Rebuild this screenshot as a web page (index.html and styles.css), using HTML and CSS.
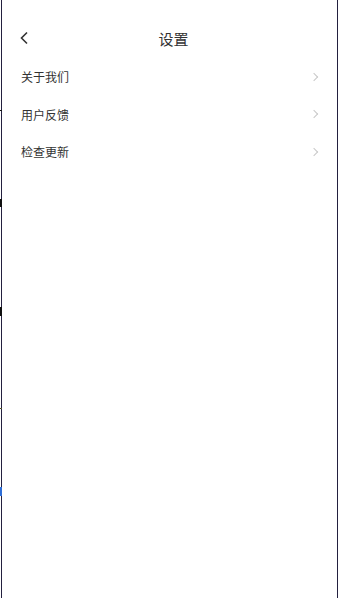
FILE: index.html
```html
<!DOCTYPE html>
<html lang="zh-CN">
<head>
    <meta charset="UTF-8">
    <meta name="viewport" content="width=device-width, initial-scale=1.0">
    <title>设置</title>
    <link rel="stylesheet" href="styles.css">
</head>
<body>
    <div class="frame">
        <!-- Header -->
        <header class="nav">
            <a href="#" class="back">
                <svg width="10" height="14" viewBox="0 0 10 14"><path d="M8 1.5 L2.5 7 L8 12.5" fill="none" stroke="#333" stroke-width="1.6"/></svg>
            </a>
            <div class="title">设置</div>
            <div class="spacer"></div>
        </header>

        <!-- Settings list -->
        <ul class="menu">
            <li class="item"><span>关于我们</span><i class="arrow"></i></li>
            <li class="item"><span>用户反馈</span><i class="arrow"></i></li>
            <li class="item"><span>检查更新</span><i class="arrow"></i></li>
        </ul>
    </div>

    <!-- bits of the window behind, peeking at the left edge -->
    <div class="edge e1"></div>
    <div class="edge e2"></div>
    <div class="edge e3"></div>
    <div class="edge e4"></div>
    <div class="edge e5"></div>
</body>
</html>
```

FILE: styles.css
```css
* {
    margin: 0;
    padding: 0;
    box-sizing: border-box;
}
body {
    background-color: #fff;
    font-family: "Noto Sans CJK SC", "Noto Sans", sans-serif;
    color: #333;
}
.frame {
    margin-left: 1px;
    width: 337px;
    height: 598px;
    border-left: 1px solid #23203f;
    border-right: 1px solid #23203f;
    background-color: #fff;
}

/* Header */
.nav {
    height: 58px;
    display: grid;
    grid-template-columns: 40px 1fr 40px;
    align-items: center;
    padding-top: 18px;
}
.back {
    display: flex;
    justify-content: center;
    padding-left: 4px;
    padding-bottom: 1px;
}
.title {
    text-align: center;
    font-size: 15px;
    padding-left: 8px;
    color: #333;
}

/* List */
.menu {
    list-style: none;
}
.item {
    height: 37.5px;
    display: flex;
    justify-content: space-between;
    align-items: center;
    padding: 0 20px 0 19px;
    font-size: 12px;
    color: #333;
}
.arrow {
    width: 6px;
    height: 6px;
    border-top: 1px solid #c8c8c8;
    border-right: 1px solid #c8c8c8;
    transform: rotate(45deg);
}

/* left edge marks */
.edge {
    position: absolute;
    left: 0;
    width: 2px;
    background-color: #111;
}
.e1 { top: 110px; height: 1px; }
.e2 { top: 199px; height: 8px; }
.e3 { top: 307px; height: 9px; }
.e4 { top: 408px; height: 1px; background-color: #555530; }
.e5 { top: 487px; height: 9px; background-color: #2f6fd8; }
```
